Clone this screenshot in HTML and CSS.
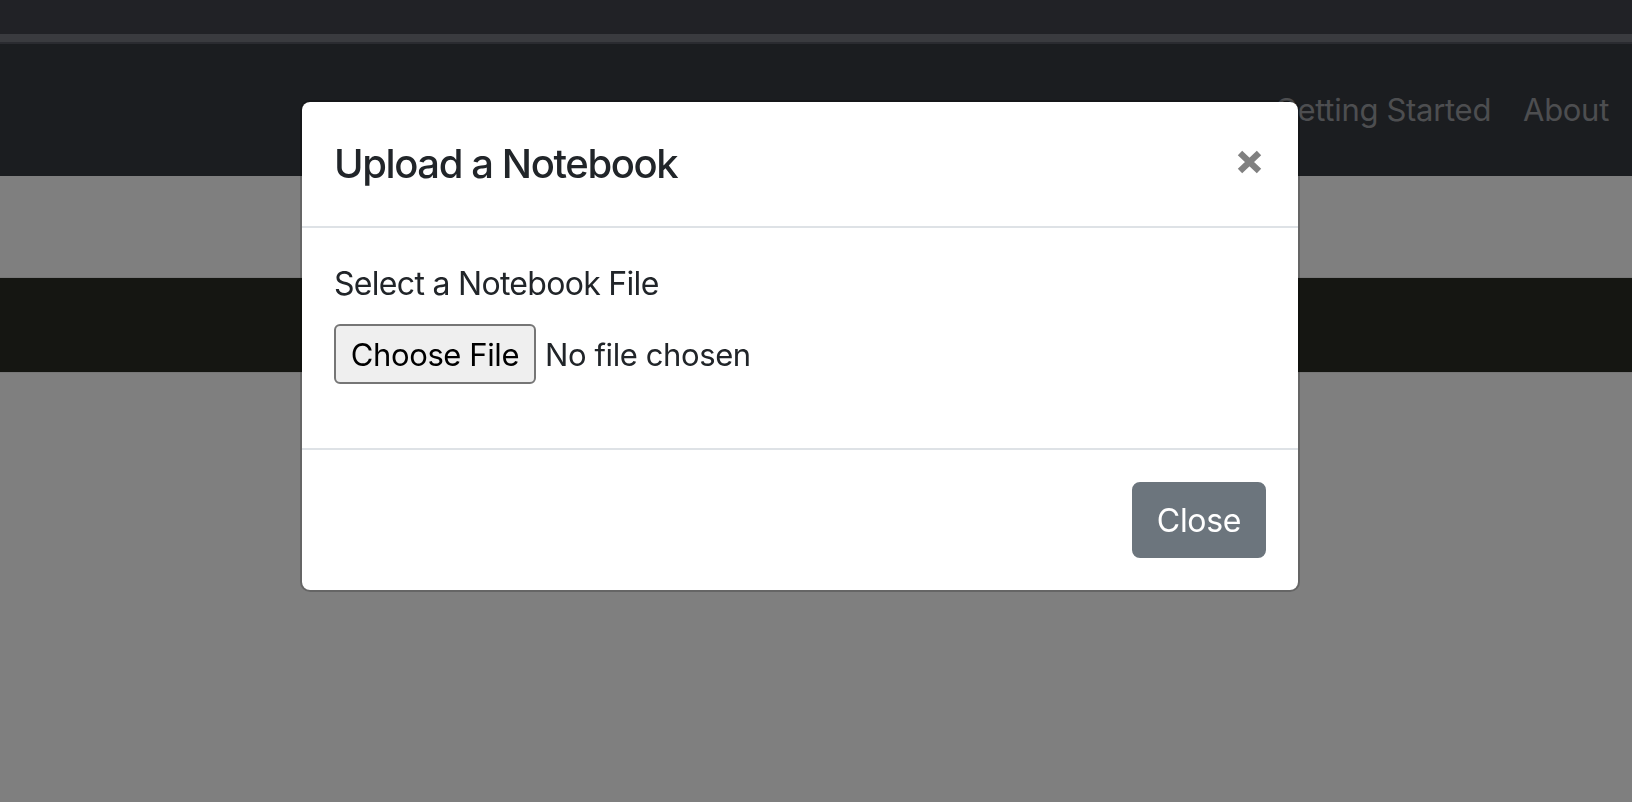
FILE: index.html
```html
<!DOCTYPE html>
<html lang="en">
<head>
<meta charset="utf-8">
<title>Upload a Notebook</title>
<link rel="stylesheet" href="styles.css">
</head>
<body>
  <div class="tabbar"></div>
  <div class="stripe"></div>
  <nav class="navbar">
    <a class="nav-link" href="#">Getting Started</a>
    <a class="nav-link" href="#">About</a>
  </nav>
  <main class="page">
    <div class="spacer"></div>
    <div class="dark-band"></div>
  </main>

  <div class="backdrop"></div>

  <div class="modal" role="dialog" aria-labelledby="modal-title">
    <div class="modal-header">
      <h5 class="modal-title" id="modal-title">Upload a Notebook</h5>
      <button class="close" type="button" aria-label="Close">
        <svg width="25" height="24" viewBox="0 0 25 24" aria-hidden="true">
          <path d="M3 3 L22 21 M22 3 L3 21" stroke="#808080" stroke-width="6.4" stroke-linecap="butt" fill="none"/>
        </svg>
      </button>
    </div>
    <div class="modal-body">
      <label class="field-label">Select a Notebook File</label>
      <div class="file-row">
        <button class="file-btn" type="button">Choose File</button>
        <span class="file-name">No file chosen</span>
      </div>
    </div>
    <div class="modal-footer">
      <button class="btn-close" type="button">Close</button>
    </div>
  </div>
</body>
</html>
```
FILE: styles.css
```css
* { box-sizing: border-box; }

html, body {
  margin: 0;
  padding: 0;
  height: 100%;
}

body {
  background: #ffffff;
  font-family: "Inter", "Noto Sans", "Liberation Sans", sans-serif;
  color: #212529;
  overflow: hidden;
}

.tabbar {
  height: 34px;
  background: #42444c;
}

.stripe {
  height: 10px;
  background: #74767e;
  border-bottom: 2px solid #545760;
}

.navbar {
  height: 132px;
  background: #363a40;
  display: flex;
  justify-content: flex-end;
  align-items: center;
  gap: 32px;
  padding: 0 23px 0 0;
}

.nav-link {
  color: #9a9ca0;
  text-decoration: none;
  font-size: 31px;
  letter-spacing: -0.3px;
  line-height: 48px;
}

.page {
  display: flex;
  flex-direction: column;
}

.spacer {
  height: 101px;
}

.dark-band {
  height: 96px;
  background: #2a2c24;
  border-top: 1px solid #eeeeee;
  border-bottom: 1px solid #eeeeee;
}

.backdrop {
  position: fixed;
  inset: 0;
  background: rgba(0, 0, 0, 0.5);
}

.modal {
  position: absolute;
  left: 300px;
  top: 100px;
  width: 1000px;
  background: #ffffff;
  border: 2px solid rgba(0, 0, 0, 0.2);
  border-radius: 10px;
  background-clip: padding-box;
}

.modal-header {
  display: flex;
  justify-content: space-between;
  align-items: flex-start;
  padding: 32px 36px 32px 32px;
  border-bottom: 2px solid #dee2e6;
}

.modal-title {
  margin: 0;
  font-size: 40px;
  font-weight: 500;
  line-height: 60px;
  letter-spacing: -1.4px;
  color: #212529;
}

.close {
  border: 0;
  background: transparent;
  padding: 0;
  margin-top: 16px;
  width: 25px;
  height: 24px;
  cursor: pointer;
}

.close svg { display: block; }

.modal-body {
  padding: 32px;
  display: flex;
  flex-direction: column;
}

.field-label {
  font-size: 32px;
  line-height: 48px;
  letter-spacing: -0.7px;
  margin-bottom: 16px;
}

.file-row {
  display: flex;
  align-items: center;
  gap: 9px;
  margin-bottom: 32px;
  height: 60px;
}

.file-btn {
  height: 60px;
  width: 202px;
  padding: 0;
  font-family: inherit;
  font-size: 31px;
  letter-spacing: -0.4px;
  color: #000000;
  background: #efefef;
  border: 2px solid #767676;
  border-radius: 6px;
}

.file-name {
  font-size: 31px;
  letter-spacing: -0.4px;
  color: #212529;
}

.modal-footer {
  display: flex;
  justify-content: flex-end;
  padding: 24px;
  border-top: 2px solid #dee2e6;
}

.btn-close {
  margin: 8px;
  height: 76px;
  width: 134px;
  padding: 0;
  font-family: inherit;
  font-size: 32px;
  letter-spacing: -0.3px;
  color: #ffffff;
  background: #6c757d;
  border: 2px solid #6c757d;
  border-radius: 8px;
}
```
